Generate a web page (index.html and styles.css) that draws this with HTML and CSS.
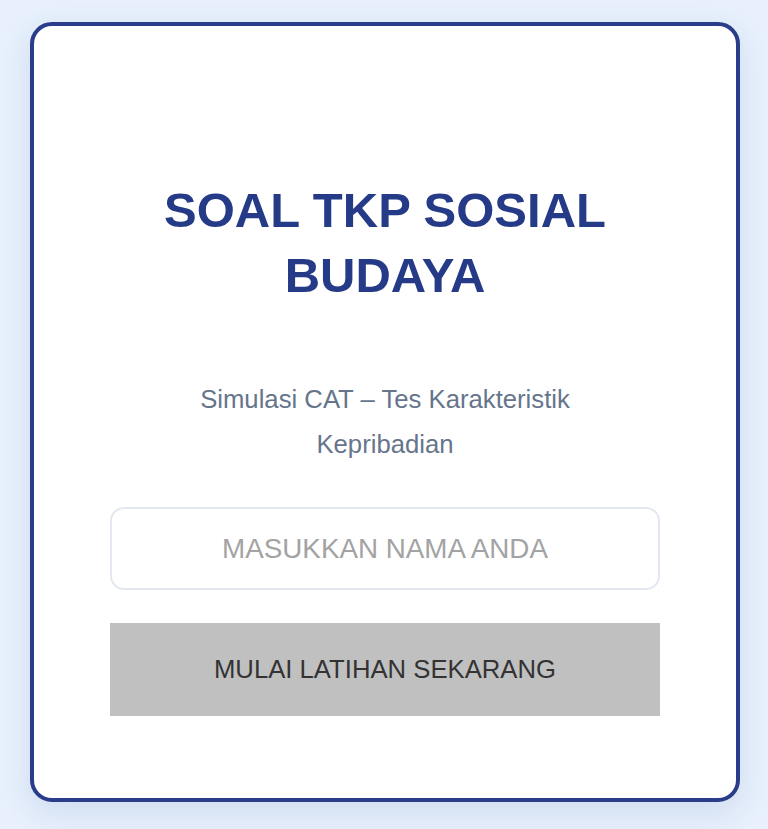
FILE: index.html
```html
<!DOCTYPE html>
<html lang="id">
<head>
<meta charset="utf-8">
<title>Soal TKP Sosial Budaya</title>
<link rel="stylesheet" href="styles.css">
</head>
<body>
<main class="card">
  <h1 class="title">SOAL TKP SOSIAL BUDAYA</h1>
  <p class="subtitle">Simulasi CAT – Tes Karakteristik Kepribadian</p>
  <input class="name-input" type="text" placeholder="MASUKKAN NAMA ANDA">
  <button class="start-btn" type="button">MULAI LATIHAN SEKARANG</button>
</main>
</body>
</html>
```
FILE: styles.css
```css
* { box-sizing: border-box; }
html, body { margin: 0; padding: 0; }
body {
  background: #e7f0fc;
  font-family: "Liberation Sans", Arial, Helvetica, sans-serif;
  display: flex;
  justify-content: center;
  padding-top: 22px;
  padding-left: 2px;
  min-height: 829px;
}
.card {
  width: 710px;
  height: 780px;
  background: #ffffff;
  border: 4px solid #2a3d8a;
  border-radius: 22px;
  box-shadow: 0 10px 30px rgba(40, 70, 150, 0.12);
  padding: 152px 76px 82px;
  display: flex;
  flex-direction: column;
  align-items: stretch;
  text-align: center;
}
.title {
  margin: 0 auto;
  max-width: 470px;
  font-size: 49px;
  line-height: 65px;
  font-weight: 700;
  color: #263b87;
}
.subtitle {
  margin: 69px auto 0;
  max-width: 400px;
  font-size: 25.7px;
  line-height: 45px;
  color: #66758c;
}
.name-input {
  margin-top: 40px;
  height: 83px;
  width: 100%;
  border: 2px solid #e3e8f0;
  border-radius: 14px;
  background: #fff;
  text-align: center;
  font-family: inherit;
  font-size: 27.8px;
  color: #333;
  outline: none;
}
.name-input::placeholder {
  color: #a3a3a3;
  opacity: 1;
}
.start-btn {
  margin-top: 33px;
  height: 93px;
  width: 100%;
  border: none;
  background: #c0c0c0;
  color: #333333;
  font-family: inherit;
  font-size: 25.7px;
  padding: 0;
}
```
